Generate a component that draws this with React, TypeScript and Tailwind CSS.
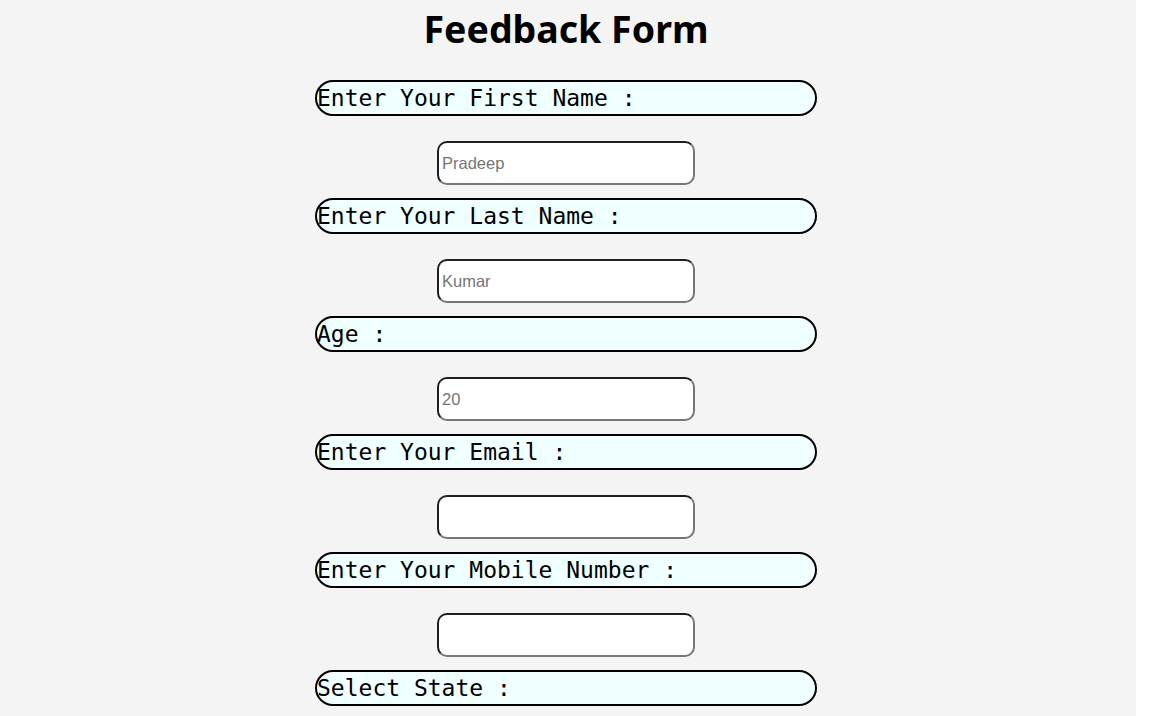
import React from 'react';

interface Field {
  label: string;
  placeholder: string;
}

const fields: Field[] = [
  { label: 'Enter Your First Name :', placeholder: 'Pradeep' },
  { label: 'Enter Your Last Name :', placeholder: 'Kumar' },
  { label: 'Age :', placeholder: '20' },
  { label: 'Enter Your Email :', placeholder: '' },
  { label: 'Enter Your Mobile Number :', placeholder: '' },
];

function Label({ text }: { text: string }) {
  return (
    <div className="w-[502px] h-[36px] shrink-0 rounded-full border-2 border-black bg-[#f0ffff] flex items-center text-[23px] leading-none text-black font-['DejaVu_Sans_Mono',monospace] whitespace-pre">
      {text}
    </div>
  );
}

function Input({ placeholder }: { placeholder: string }) {
  return (
    <input
      type="text"
      placeholder={placeholder}
      className="w-[258px] h-[44px] shrink-0 mt-[25px] mb-[13px] rounded-[10px] border-2 border-t-[#1f1f1f] border-l-[#1f1f1f] border-b-[#767676] border-r-[#767676] bg-white px-[3px] text-[16.5px] font-['Liberation_Sans',Arial,sans-serif] placeholder:text-[#757575] outline-none"
    />
  );
}

export default function App() {
  return (
    <div className="w-[1136px] h-[716px] overflow-hidden bg-[#f4f4f4]">
      <div className="w-[1132px] flex flex-col items-center">
        <h1 className="mt-[5px] h-[75px] text-[37.5px] leading-[48px] font-bold text-black font-['Noto_Sans',sans-serif]">
          Feedback Form
        </h1>
        {fields.map((f, i) => (
          <React.Fragment key={i}>
            <Label text={f.label} />
            <Input placeholder={f.placeholder} />
          </React.Fragment>
        ))}
        <Label text="Select State :" />
      </div>
    </div>
  );
}
